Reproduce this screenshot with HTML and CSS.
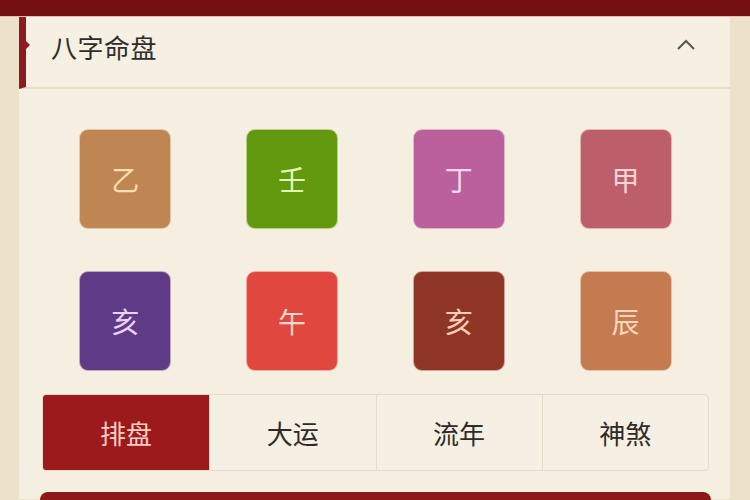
FILE: index.html
```html
<!DOCTYPE html>
<html lang="zh">
<head>
<meta charset="utf-8">
<link rel="stylesheet" href="styles.css">
</head>
<body>
<div class="topbar"></div>
<div class="page">
  <div class="panel">
    <div class="header">
      <div class="title">八字命盘</div>
      <svg class="chev" width="20" height="12" viewBox="0 0 20 12"><path d="M2 10 L10 2 L18 10" fill="none" stroke="#5a5652" stroke-width="2"/></svg>
    </div>
    <div class="content">
      <div class="grid">
        <div class="cell"><div class="tile t1">乙</div></div>
        <div class="cell"><div class="tile t2">壬</div></div>
        <div class="cell"><div class="tile t3">丁</div></div>
        <div class="cell"><div class="tile t4">甲</div></div>
        <div class="cell"><div class="tile t5">亥</div></div>
        <div class="cell"><div class="tile t6">午</div></div>
        <div class="cell"><div class="tile t7">亥</div></div>
        <div class="cell"><div class="tile t8">辰</div></div>
      </div>
      <div class="tabs">
        <div class="tab active">排盘</div>
        <div class="tab">大运</div>
        <div class="tab">流年</div>
        <div class="tab">神煞</div>
      </div>
      <div class="bottombar"></div>
    </div>
  </div>
</div>
</body>
</html>
```
FILE: styles.css
```css
* { box-sizing: border-box; }
html, body { margin: 0; padding: 0; }
body {
  width: 750px;
  height: 500px;
  overflow: hidden;
  background: #ece2c9;
  font-family: "Noto Sans CJK SC", "Noto Sans", sans-serif;
}
.topbar {
  height: 17px;
  background: #72100f;
  border-bottom: 1px solid #e9b9b3;
}
.page {
  padding-left: 19px;
  width: 730px;
}
.panel {
  background: #f5efe2;
  height: 482px;
}
.header {
  position: relative;
  height: 72px;
  background: #f6f0e3;
  border-bottom: 2px solid #e6ddc9;
  border-left: 7px solid #8e1a22;
  display: flex;
  align-items: center;
  justify-content: space-between;
  padding: 0 34px 12px 25px;
}
.header::after {
  content: "";
  position: absolute;
  left: 0;
  top: 24px;
  border-left: 4px solid #8e1a22;
  border-top: 4px solid transparent;
  border-bottom: 4px solid transparent;
}
.title {
  font-size: 26px;
  color: #2e2c2a;
  letter-spacing: 0.5px;
}
.chev { display: block; margin-bottom: 2px; }
.content {
  padding: 40px 21px 0 23px;
}
.grid {
  display: grid;
  grid-template-columns: repeat(4, 1fr);
  row-gap: 42px;
}
.cell {
  display: flex;
  justify-content: center;
}
.tile {
  width: 92px;
  height: 100px;
  border-radius: 9px;
  display: flex;
  align-items: center;
  justify-content: center;
  font-size: 28px;
  font-weight: 400;
  border: 1px solid rgba(255,240,220,0.6);
}
.t1 { background: #bf8653; color: #f8ddb2; }
.t2 { background: #62990e; color: #e2f7b2; }
.t3 { background: #b9609d; color: #f7d6ec; }
.t4 { background: #bd5e6b; color: #f7d3d8; }
.t5 { background: #5e3a87; color: #ead3f2; }
.t6 { background: #e0473f; color: #fcd6ca; }
.t7 { background: #8e3526; color: #f7cdb5; }
.t8 { background: #c47b50; color: #f7d4bc; }
.tabs {
  margin-top: 23px;
  display: grid;
  grid-template-columns: repeat(4, 1fr);
  height: 77px;
  border: 1px solid #e4dbc8;
  border-radius: 4px;
  background: #f6f0e4;
  overflow: hidden;
}
.tab {
  display: flex;
  align-items: center;
  justify-content: center;
  font-size: 26px;
  color: #2e2c2a;
  border-left: 1px solid #e4dbc8;
}
.tab:first-child { border-left: none; }
.tab.active {
  background: #9c1a1c;
  color: #f7cfc0;
}
.bottombar {
  margin-top: 21px;
  height: 20px;
  background: #8e1717;
  border-radius: 8px 8px 0 0;
  margin-right: -2px;
  margin-left: -2px;
}
```
